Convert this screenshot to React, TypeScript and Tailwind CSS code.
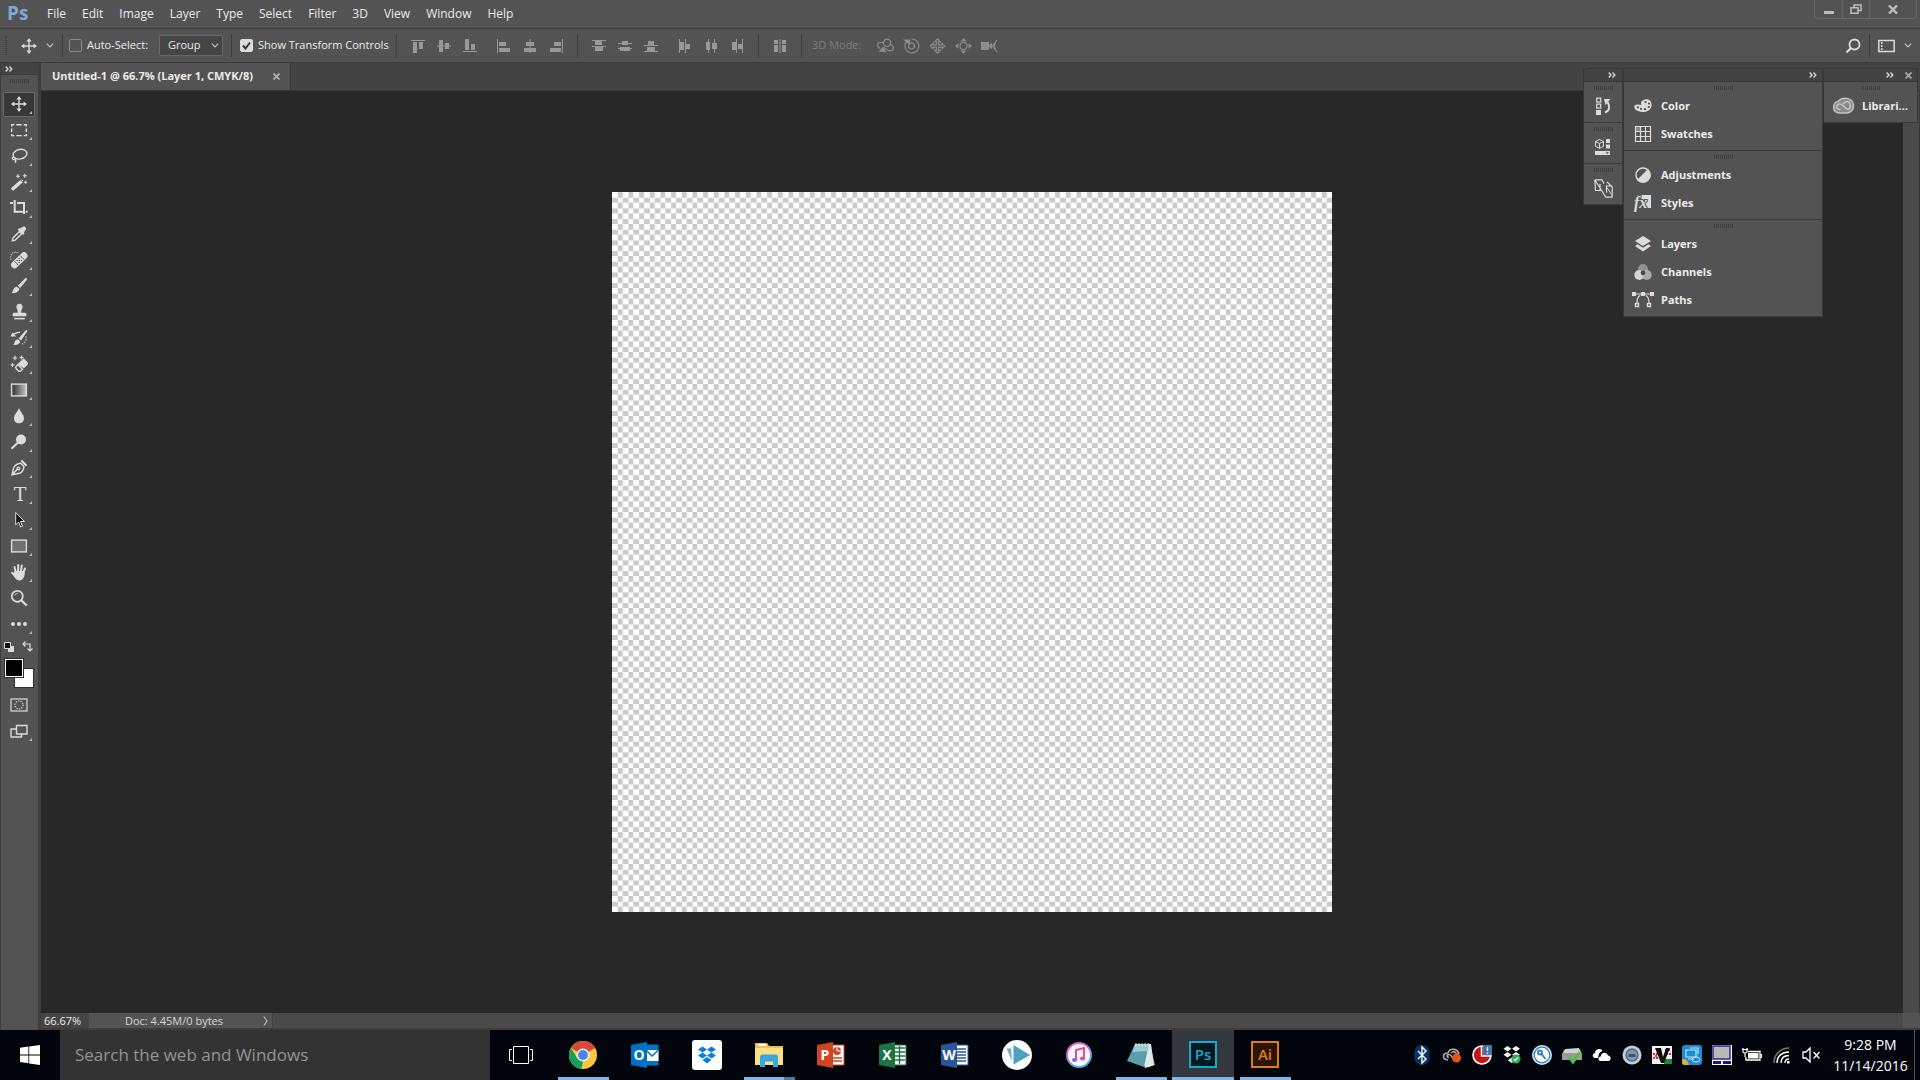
import type { ReactNode } from 'react';

const menus = ['File', 'Edit', 'Image', 'Layer', 'Type', 'Select', 'Filter', '3D', 'View', 'Window', 'Help'];

function Icon({ size = 18, children }: { size?: number; children: ReactNode }) {
  return (
    <svg
      width={size}
      height={size}
      viewBox={`0 0 ${size} ${size}`}
      fill="none"
      stroke="currentColor"
      strokeWidth="1.4"
      className="shrink-0"
    >
      {children}
    </svg>
  );
}

function DoubleChevron() {
  return (
    <svg width="8" height="6" viewBox="0 0 8 6" fill="none" stroke="#d6d6d6" strokeWidth="1.4">
      <path d="M.7.6 3 3 .7 5.4M4.5.6 6.8 3 4.5 5.4" />
    </svg>
  );
}

function Chevron() {
  return (
    <svg width="8" height="5" viewBox="0 0 8 5" fill="none" stroke="#c4c4c4" strokeWidth="1.1">
      <path d="M.8.6 4 3.9 7.2.6" />
    </svg>
  );
}

function Gripper() {
  return (
    <div className="flex h-1 justify-center gap-px">
      {Array.from({ length: 10 }, (_, i) => (
        <span key={i} className="w-px bg-[#3f3f3f]" />
      ))}
    </div>
  );
}

const Separator = () => <span className="mx-2 h-[23px] w-px shrink-0 bg-[#3d3d3d]" />;

const moveIcon = (
  <Icon>
    <path d="M9 3v12M3 9h12" />
    <path
      d="M9 1 6.4 4.4h5.2zM9 17l-2.6-3.4h5.2zM1 9l3.4-2.6v5.2zM17 9l-3.4-2.6v5.2z"
      fill="currentColor"
      stroke="none"
    />
  </Icon>
);

const tools: { name: string; icon: ReactNode; plain?: boolean }[] = [
  { name: 'Move', icon: moveIcon },
  {
    name: 'Rectangular Marquee',
    icon: (
      <Icon>
        <path d="M1.7 5.5V3.7h2.6M6.3 3.7h5.4M13.7 3.7h2.6v1.8M16.3 7.4v3.6M16.3 13v1.6h-2.6M11.7 14.6H6.3M4.3 14.6H1.7V13M1.7 11V7.4" />
      </Icon>
    ),
  },
  {
    name: 'Lasso',
    icon: (
      <Icon>
        <ellipse cx="10" cy="7.2" rx="7" ry="4.8" transform="rotate(-12 10 7.2)" />
        <path d="M4 9.7c-1.5.2-2.2 2-1 2.7 1.4.6 3-.3 2.6-1.6M5 12c.9 1.1.9 2.3.2 3.8" />
      </Icon>
    ),
  },
  {
    name: 'Magic Wand',
    icon: (
      <Icon>
        <path d="m3 15.6 8.6-7.4" strokeWidth="3.4" strokeLinecap="round" />
        <path d="m11 7.2 1.8 1.8" stroke="#535353" strokeWidth="1" />
        <path d="M8 1.2v4M6 3.2h4M14.8.8v4M12.8 2.8h4M15.6 7.8v3M14 9.3h3" strokeWidth="1.1" />
      </Icon>
    ),
  },
  {
    name: 'Crop',
    icon: (
      <Icon>
        <path d="M0 4h3M4.7 1v11.8H14M7 4h7v11M15.6 12.8h2" strokeWidth="2" />
      </Icon>
    ),
  },
  {
    name: 'Eyedropper',
    icon: (
      <Icon>
        <path d="m2.3 15.8.7-2.9 6.5-6.4 2.2 2.2-6.4 6.4z" />
        <path
          d="M10 3.6 13 1.8c1.2-1.2 4 1.4 2.8 2.8l-1.9 3 .6 1-1.4 1.4-5.4-5.3L9 3.2z"
          fill="currentColor"
          stroke="none"
        />
      </Icon>
    ),
  },
  {
    name: 'Spot Healing Brush',
    icon: (
      <Icon>
        <path d="m4.6 13.8 9.4-9" strokeWidth="7" strokeLinecap="round" />
        <path d="m4.5 10.2 3.8 4M10.4 4.7l3.8 4" stroke="#535353" strokeWidth="1" />
        <path d="M9.3 7.3v.1M7.2 9.4v.1M11.4 9.4v.1M9.3 11.5v.1M9.3 9.4v.1" stroke="#535353" strokeLinecap="round" />
        <path d="M1.1 8.5C-.3 5.4 1.8 1.6 5 1.3c1.2-.1 2 .1 2.8.5" strokeWidth="1.2" strokeDasharray="1 1.2" />
      </Icon>
    ),
  },
  {
    name: 'Brush',
    icon: (
      <Icon>
        <path
          d="M16.6 1.2c.7.6.4 1.4-.3 2.3L10.2 11 7.7 8.8l6.8-6.9c.8-.8 1.5-1.2 2.1-.7zM7 9.7l2.3 2.1c-.1 2.7-3.3 4.8-7.9 4.3 1.6-1 1.3-2.6 2.2-4.2.8-1.4 2-2.2 3.4-2.2z"
          fill="currentColor"
          stroke="none"
        />
      </Icon>
    ),
  },
  {
    name: 'Clone Stamp',
    icon: (
      <Icon>
        <path
          d="M6.4 4.1c0-4.4 6.2-4.4 6.2 0 0 2-1.6 2.6-1.4 5.7h3.6c1 0 1.6.7 1.6 1.7v1.7H2.6v-1.7c0-1 .6-1.7 1.6-1.7h3.6c.2-3.1-1.4-3.7-1.4-5.7z"
          fill="currentColor"
          stroke="none"
        />
        <path d="M4.2 15.6h10.6" strokeWidth="1.6" />
      </Icon>
    ),
  },
  {
    name: 'History Brush',
    icon: (
      <Icon>
        <path
          d="M17 1c.5.5.3 1.2-.2 2L11 11.4 8.6 9.6l6.3-7.4C15.6 1.3 16.5.6 17 1zM7.8 10.300l2.400 1.900c-.3 2.600-3.200 4.300-7.200 3.700 1.500-1 1.300-2.400 2-3.700.7-1.200 1.500-1.900 2.800-1.900z"
          fill="currentColor"
          stroke="none"
        />
        <path d="M2.5 6.5C4.5 3.5 7.6 3.5 10 3.3" />
        <path d="M.3 7.5h5.8L2.6 3.4z" fill="currentColor" stroke="none" />
        <path d="M15.8 7.5c1 3-.5 6.5-3.5 7.5" strokeWidth="1.2" strokeDasharray="1.2 1.5" />
      </Icon>
    ),
  },
  {
    name: 'Background Eraser',
    icon: (
      <Icon>
        <path d="m8.6 9 5.1-4.8 3.1 3.2c.7.7.7 1.4 0 2l-3 3z" fill="currentColor" />
        <path d="m7.8 9.7 4.7 4.6-1.5 1.4c-.9.8-1.9.8-2.7 0l-2-2c-.8-.8-.8-1.7 0-2.5z" />
        <path d="M5 .8v4.4M2.8 3h4.4M11.5.5v4M9.5 2.5h4M2.5 8v4M.5 10h4" strokeWidth="1.2" />
      </Icon>
    ),
  },
  {
    name: 'Gradient',
    icon: (
      <Icon>
        <defs>
          <linearGradient id="gradient-tool">
            <stop offset="0" stopColor="#2f2f2f" />
            <stop offset="1" stopColor="#c4c4c4" />
          </linearGradient>
        </defs>
        <rect x="1.6" y="3.1" width="14.8" height="11.8" fill="url(#gradient-tool)" />
      </Icon>
    ),
  },
  {
    name: 'Blur',
    icon: (
      <Icon>
        <path d="M9 1c1 3.7 5 6.2 5 10.4 0 6.4-10 6.4-10 0C4 7.2 8 4.7 9 1z" fill="currentColor" stroke="none" />
      </Icon>
    ),
  },
  {
    name: 'Dodge',
    icon: (
      <Icon>
        <circle cx="11" cy="6.5" r="5" fill="currentColor" stroke="none" />
        <path d="m8 9.5-6.5 6.3" strokeWidth="2" />
      </Icon>
    ),
  },
  {
    name: 'Pen',
    icon: (
      <Icon>
        <path d="m2 15.8 1.7-7.3c1.5-2.5 4-4.1 7-4.3l3.2 3.4c-.2 3.2-1.8 5.6-4.4 6.7zM2.3 15.5l5-5.3" />
        <circle cx="8.4" cy="9.4" r="1.3" />
        <path d="m10.6 2.2 1.6-1.4 5 5.1-1.5 1.6z" fill="currentColor" stroke="none" />
      </Icon>
    ),
  },
  {
    name: 'Horizontal Type',
    icon: <span className="pl-[2px] font-['DejaVu_Serif',serif] text-[19px] leading-6">T</span>,
  },
  {
    name: 'Path Selection',
    icon: (
      <Icon>
        <path d="M5.7 1.5v12.3l3-2.6 2 4.8 1.9-.8-2.1-4.7h4z" fill="#161616" strokeWidth="1" />
      </Icon>
    ),
  },
  {
    name: 'Rectangle',
    icon: (
      <Icon>
        <rect x="1.6" y="3.1" width="14.8" height="11.8" fill="#717171" />
      </Icon>
    ),
  },
  {
    name: 'Hand',
    icon: (
      <Icon>
        <path d="M5.7 9 4.5 4M8.2 8V2M11 8l.8-5.6M13.3 9.5l1.7-4M5 12.500 2 9.7" strokeWidth="2" strokeLinecap="round" />
        <path d="M4.6 8h9.8c1.2 2.7-.5 9.5-5 9.5-3.2 0-5.8-4-6.2-6z" fill="currentColor" stroke="none" />
      </Icon>
    ),
  },
  {
    name: 'Zoom',
    plain: true,
    icon: (
      <Icon>
        <circle cx="7.3" cy="7.3" r="5.5" strokeWidth="1.7" />
        <path d="M4.6 6.5c.5-1.3 1.5-2 3-2" strokeWidth="1" />
        <path d="m11.5 11.5 5.2 5" strokeWidth="2.4" />
      </Icon>
    ),
  },
  {
    name: 'Edit Toolbar',
    icon: (
      <Icon>
        <path d="M3 9h.01M9 9h.01M15 9h.01" strokeWidth="4" strokeLinecap="round" />
      </Icon>
    ),
  },
];

// solid glyphs of the align and distribute buttons, 14 by 14
const alignGroups: { name: string; d: string }[][] = [
  [
    { name: 'Align top edges', d: 'M0 1h14v1H0zM2 3h4v11H2zM8 3h4v7H8z' },
    { name: 'Align vertical centers', d: 'M0 6.5h14v1H0zM2 1h4v12H2zM8 4h4v6H8z' },
    { name: 'Align bottom edges', d: 'M0 12h14v1H0zM2 0h4v11H2zM8 5h4v6H8z' },
  ],
  [
    { name: 'Align left edges', d: 'M0 0h1v14H0zM2 3h7v4H2zM2 9h11v4H2z' },
    { name: 'Align horizontal centers', d: 'M6.5 0h1v14h-1zM3 3h8v4H3zM1 9h12v4H1z' },
    { name: 'Align right edges', d: 'M13 0h1v14h-1zM5 3h7v4H5zM1 9h11v4H1z' },
  ],
  [
    { name: 'Distribute top edges', d: 'M0 1h14v1H0zM3 2h7v4H3zM0 7h14v1H0zM3 8h8v4H3z' },
    { name: 'Distribute vertical centers', d: 'M0 4h14v1H0zM4 2h6v4H4zM0 9h14v1H0zM2 8h10v4H2z' },
    { name: 'Distribute bottom edges', d: 'M0 6h14v1H0zM4 2h6v4H4zM0 12h14v1H0zM3 8h8v4H3z' },
  ],
  [
    { name: 'Distribute left edges', d: 'M1 0h1v14H1zM2 3h4v8H2zM7 0h1v14H7zM8 5h4v5H8z' },
    { name: 'Distribute horizontal centers', d: 'M4 0h1v14H4zM2 3h4v8H2zM10 0h1v14h-1zM8 4h5v6H8z' },
    { name: 'Distribute right edges', d: 'M6 0h1v14H6zM2 3h4v8H2zM12 0h1v14h-1zM8 5h4v5H8z' },
  ],
];

const modes3d: { name: string; icon: ReactNode }[] = [
  {
    name: 'Orbit',
    icon: (
      <>
        <circle cx="10" cy="4.8" r="3.6" />
        <path d="M6.4 4.500H3C0 4.500-.3 8 3 10.500M13.500 6c3 2 4 5 1.500 6.500-2 1-5.500 0-8-3.500" />
        <path d="m3 13 3-3.500 2.500 4z" fill="currentColor" />
      </>
    ),
  },
  {
    name: 'Roll',
    icon: (
      <>
        <circle cx="8.500" cy="8" r="3" />
        <path d="M3.500 3.500a7 7 0 1 0 5-2.500" />
        <path d="M1.500 2h5v4z" fill="currentColor" />
      </>
    ),
  },
  {
    name: 'Pan',
    icon: (
      <path d="M8.500.8 5.800 3.600h1.600v3.300H4.100V5.300L1.300 8l2.800 2.700V9.100h3.300v3.300H5.800l2.700 2.800 2.700-2.800H9.600V9.100h3.300v1.600L15.700 8l-2.800-2.700v1.600H9.600V3.600h1.600z" />
    ),
  },
  {
    name: 'Slide',
    icon: (
      <>
        <circle cx="8.500" cy="8" r="3.500" />
        <path
          d="M8.500 0l2.800 3.400H5.700zM8.500 16l2.800-3.400H5.700zM0 8l3.400-2.800v5.600zM17 8l-3.400-2.800v5.600z"
          fill="currentColor"
          stroke="none"
        />
      </>
    ),
  },
  {
    name: 'Zoom 3D camera',
    icon: (
      <>
        <path d="M0 4h8v8H0zM7 8l4-3.500v7z" fill="currentColor" stroke="none" />
        <path d="m16 2-4.500 6 4.500 6M14.500 5c-1.300 1.800-1.300 4.200 0 6" />
      </>
    ),
  },
];

const panelGroups: { label: string; icon: ReactNode }[][] = [
  [
    {
      label: 'Color',
      icon: (
        <Icon>
          <path
            d="M9.5 3C12 1.3 17.5 2 17.6 7.5 17.7 13 13 15 9.6 15 4 15 .2 12.5.3 9.7c.1-2.2 3-2.6 5.1-1.9 1.7.4 2.3-.2 1.7-1.5C6.4 4.8 8 3.8 9.5 3z"
            fill="currentColor"
            stroke="none"
          />
          <path
            d="M11.5 5h.1M15 6.5h.1M14.8 10h.1M11 12.2h.1M7 11.8h.1M3.8 10.3h.1"
            stroke="#535353"
            strokeWidth="2.2"
            strokeLinecap="round"
          />
        </Icon>
      ),
    },
    {
      label: 'Swatches',
      icon: (
        <Icon>
          <path d="M1.5 1.5h15v15h-15zM6.5 1.5v15M11.5 1.5v15M1.5 6.5h15M1.5 11.5h15" strokeWidth="1.2" />
          <path d="M2 2h4v4H2z" fill="#8a8a8a" stroke="none" />
        </Icon>
      ),
    },
  ],
  [
    {
      label: 'Adjustments',
      icon: (
        <Icon>
          <circle cx="9" cy="9" r="7" />
          <path d="M14 4A7 7 0 0 1 4 14z" fill="currentColor" />
        </Icon>
      ),
    },
    {
      label: 'Styles',
      icon: (
        <Icon>
          <path d="M3 1h14v13h-4z" fill="currentColor" stroke="none" />
          <text
            x="0"
            y="14"
            fontFamily="Liberation Serif, serif"
            fontStyle="italic"
            fontWeight="700"
            fontSize="16"
            fill="currentColor"
            stroke="#535353"
            strokeWidth="2"
            paintOrder="stroke"
          >
            fx
          </text>
        </Icon>
      ),
    },
  ],
  [
    {
      label: 'Layers',
      icon: (
        <Icon>
          <path d="m9 1 8 5-8 5-8-5zM1 11l2.6-1.7L9 12.7l5.4-3.4L17 11l-8 5.5z" fill="currentColor" stroke="none" />
        </Icon>
      ),
    },
    {
      label: 'Channels',
      icon: (
        <Icon>
          <g stroke="none">
            <circle cx="9" cy="6" r="5" fill="#8f8f8f" />
            <circle cx="5.3" cy="12" r="5" fill="#d4d4d4" />
            <circle cx="12.7" cy="12" r="5" fill="#b4b4b4" fillOpacity=".9" />
            <circle cx="9" cy="9.8" r="2.4" fill="#4a4a4a" />
          </g>
        </Icon>
      ),
    },
    {
      label: 'Paths',
      icon: (
        <Icon size={22}>
          <path d="M2 5h18M8 6.5C5.5 8 5 11 5 14M14 6.5c2.5 1.5 3 4.5 3 7.5" strokeWidth="1.2" />
          <path d="M0 3h4v4H0zM18 3h4v4h-4zM9 3h4v4H9z" fill="currentColor" stroke="none" />
          <path d="M3.5 14.5h3v3h-3zM15.5 14.5h3v3h-3z" />
        </Icon>
      ),
    },
  ],
];

const collapsedPanels: { name: string; icon: ReactNode }[] = [
  {
    name: 'History',
    icon: (
      <>
        <path d="M2.7 1.2h4v4h-4zM2.7 7.2h4v4h-4z" strokeWidth="1.2" />
        <path d="M2 13h5v5H2z" fill="currentColor" stroke="none" />
        <path d="M11 15.5c4.500-1.500 5.500-6 2.500-10.500" strokeWidth="2" />
        <path d="M10 2h6.500l-5 6z" fill="currentColor" stroke="none" />
      </>
    ),
  },
  {
    name: 'Properties',
    icon: (
      <>
        <path d="m5.5 1.5 4 2v4.8l-4 2-4-2V3.5zM1.5 3.5l4 2 4-2M5.5 5.5v4.8" strokeWidth="1" />
        <path d="M12 1h4v4h-4zM12 6.5h4v4h-4zM1 13h15v4H1z" fill="currentColor" stroke="none" />
        <path d="M11.5 14.3H15L13.300 16z" fill="#535353" stroke="none" />
      </>
    ),
  },
  {
    name: 'Device Preview',
    icon: (
      <>
        <path d="M.8.8 1.500 11.500H6V5M.8.8H8l2 4M.8.8l11 17.400h6.400V8L13 3M12.500 13.500V7h5.500" strokeWidth="1.2" />
        <path d="m13 8.500 4.500 7" strokeWidth="1" />
      </>
    ),
  },
];

function OfficeIcon({ letter, color, kind }: { letter: string; color: string; kind: string }) {
  return (
    <svg width="28" height="28" viewBox="0 0 28 28">
      <path d="M14 4h13v20H14z" fill={kind === 'mail' ? '#0072c6' : '#fff'} stroke={color} />
      {kind === 'mail' && (
        <>
          <path d="M15 9h12.5v11H15z" fill="#fff" />
          <path d="m15 9 6 6 6.5-6" fill="none" stroke="#0072c6" strokeWidth="1.5" />
        </>
      )}
      {kind === 'chart' && (
        <>
          <circle cx="20" cy="10" r="4" fill={color} />
          <path d="M16 17h9M16 20h9" stroke={color} strokeWidth="1.5" />
          <path d="M20 5v5h5" fill="none" stroke="#fff" />
        </>
      )}
      {kind === 'grid' && <path d="M16 7h10M16 11h10M16 15h10M16 19h10M20.5 5v18" stroke={color} strokeWidth="1.5" />}
      {kind === 'lines' && <path d="M16 8h9M16 11h9M16 14h9M16 17h9M16 20h9" stroke={color} strokeWidth="1.5" />}
      <path d="M0 4 16 1v26L0 24z" fill={color} />
      <text x="8" y="19" textAnchor="middle" fontFamily="Open Sans, sans-serif" fontWeight="700" fontSize="14" fill="#fff">
        {letter}
      </text>
    </svg>
  );
}

function AdobeIcon({ label, color, fill }: { label: string; color: string; fill: string }) {
  return (
    <svg width="28" height="28" viewBox="0 0 28 28">
      <rect x="1" y="1" width="26" height="25" fill={fill} stroke={color} strokeWidth="2" />
      <text x="14" y="19" textAnchor="middle" fontFamily="Open Sans, sans-serif" fontSize="15" fontWeight="600" fill={color}>
        {label}
      </text>
    </svg>
  );
}

const taskbarApps: { name: string; state?: 'open' | 'stacked' | 'active'; icon: ReactNode }[] = [
  {
    name: 'Task View',
    icon: (
      <svg width="24" height="20" viewBox="0 0 24 20" fill="none" stroke="#fff">
        <path d="M4.5 1.5h15v17h-15zM3 4.5H.5v11H3M21 4.5h2.5v11H21" />
      </svg>
    ),
  },
  {
    name: 'Chrome',
    state: 'open',
    icon: (
      <svg width="28" height="28" viewBox="0 0 28 28">
        <circle cx="14" cy="14" r="14" fill="#fdc83a" />
        <path d="M14 14 1.9 7A14 14 0 0 1 26.1 7z" fill="#d8483c" />
        <path d="M1.9 7 8.5 17.5 14 20l-1.5 8A14 14 0 0 1 1.9 7z" fill="#159f5c" />
        <path d="M14 7h12.1L14 10z" fill="#d8483c" />
        <circle cx="14" cy="14" r="6.5" fill="#f2f2f2" />
        <circle cx="14" cy="14" r="5" fill="#4a84f0" />
      </svg>
    ),
  },
  { name: 'Outlook', icon: <OfficeIcon letter="O" color="#0072c6" kind="mail" /> },
  {
    name: 'Dropbox',
    icon: (
      <svg width="30" height="30" viewBox="0 0 30 30">
        <rect width="30" height="30" rx="3" fill="#fff" />
        <path
          d="m10.5 6.5 4.5 3-4.5 3-4.5-3zM19.5 6.5l4.5 3-4.5 3-4.5-3zM10.5 12.5l4.5 3-4.5 3-4.5-3zM19.5 12.5l4.5 3-4.5 3-4.5-3zM15 17l4.5 3L15 23.5 10.5 20z"
          fill="#0a7fe6"
        />
      </svg>
    ),
  },
  {
    name: 'File Explorer',
    state: 'stacked',
    icon: (
      <svg width="28" height="26" viewBox="0 0 28 26">
        <path d="M0 1h12l2 3h14v19H0z" fill="#eec04f" />
        <path d="M3 2h8v2H3z" fill="#fff" />
        <path d="M0 6h28v17H0z" fill="#fbdf86" />
        <path d="M5 25V15c0-1.5 1-2.5 2.5-2.5h13c1.5 0 2.5 1 2.5 2.5v10h-5v-5.5h-8V25z" fill="#36a9e1" />
      </svg>
    ),
  },
  { name: 'PowerPoint', icon: <OfficeIcon letter="P" color="#d04423" kind="chart" /> },
  { name: 'Excel', icon: <OfficeIcon letter="X" color="#1f7244" kind="grid" /> },
  { name: 'Word', icon: <OfficeIcon letter="W" color="#2a5699" kind="lines" /> },
  {
    name: 'Media Player',
    icon: (
      <svg width="30" height="30" viewBox="0 0 30 30">
        <circle cx="15" cy="15" r="15" fill="#fff" />
        <path d="M11.5 5 28 15 11.5 24.5z" fill="#4f9fc4" />
        <path d="M4.5 8.5H9L10 21z" fill="#6bb0cf" />
      </svg>
    ),
  },
  {
    name: 'iTunes',
    icon: (
      <svg width="26" height="26" viewBox="0 0 26 26">
        <defs>
          <linearGradient id="itunes" x1="0" x2=".4" y2="1">
            <stop offset="0" stopColor="#f0609a" />
            <stop offset=".5" stopColor="#b874e0" />
            <stop offset="1" stopColor="#40b8f0" />
          </linearGradient>
        </defs>
        <circle cx="13" cy="13" r="12" fill="#fbf7fc" stroke="url(#itunes)" strokeWidth="2" />
        <path d="M10 18V8l8-2v10" fill="none" stroke="#e0508c" strokeWidth="2" />
        <ellipse cx="8.5" cy="18" rx="2.5" ry="2" fill="#8a68dc" />
        <ellipse cx="16.5" cy="16.5" rx="2.5" ry="2" fill="#d050a8" />
      </svg>
    ),
  },
  {
    name: 'Notepad',
    state: 'open',
    icon: (
      <svg width="28" height="28" viewBox="0 0 28 28">
        <path d="M23 4l5 20-7 2.5z" fill="#b98d50" />
        <path d="M9 3h15l3 21-9 3z" fill="#dfe9ea" />
        <path d="M8 3h14l-5 23L0 20z" fill="#5b9da8" />
        <path d="M8 3h14l-1.5 7-15 1z" fill="#9ccbd2" />
        <path d="M9 2v3M12 2v3M15 2v3M18 2v3M21 2v3" stroke="#dfe9ea" />
      </svg>
    ),
  },
  { name: 'Photoshop', state: 'active', icon: <AdobeIcon label="Ps" color="#18a9cf" fill="#04181f" /> },
  { name: 'Illustrator', state: 'open', icon: <AdobeIcon label="Ai" color="#e07b16" fill="#2a1503" /> },
];

const trayIcons: { name: string; icon: ReactNode }[] = [
  {
    name: 'Bluetooth',
    icon: (
      <>
        <rect x="2.5" width="15" height="20" rx="7" fill="#0a3264" />
        <path d="m6 6 8 8-4 4V2l4 4-8 8" fill="none" stroke="#fff" strokeWidth="1.4" />
      </>
    ),
  },
  {
    name: 'Creative Cloud',
    icon: (
      <>
        <path
          d="M6 15c-6-.5-6-7 0-7 2-6 10-4 11 1M7 12.5c-2.5 0-2.5-3 0-3s4 5 6 5M9 8c3-3 6 0 6 3"
          fill="none"
          stroke="#a9a9a9"
          strokeWidth="1.6"
        />
        <circle cx="14.5" cy="13" r="4.5" fill="#ef4e14" />
      </>
    ),
  },
  {
    name: 'Backup',
    icon: (
      <>
        <circle cx="10" cy="10" r="9" fill="#c81414" stroke="#fff" strokeWidth="1.6" />
        <path d="M11 0h9v10h-9z" fill="#3c78a8" />
        <path d="M9.5 1.5V11H19" fill="none" stroke="#fff" strokeWidth="1.5" />
        <path d="M15.5 2v4M15.5 7.5V9" stroke="#fff" strokeWidth="1.3" />
      </>
    ),
  },
  {
    name: 'Dropbox',
    icon: (
      <>
        <path
          d="m5.5 1 4 2.8-4 2.8-4-2.8zM14 1l4 2.8-4 2.8-4-2.8zM5.5 7l4 2.8-4 2.8-4-2.8zM14 7l4 2.8-4 2.8-4-2.8zM9.7 12.5l4 2.8-4 2.8-4-2.8z"
          fill="#f5f5f5"
        />
        <circle cx="14" cy="14" r="4.5" fill="#34a853" />
        <path d="m11.8 14 1.6 1.6 2.8-3.2" fill="none" stroke="#fff" strokeWidth="1.3" />
      </>
    ),
  },
  {
    name: 'Password Manager',
    icon: (
      <>
        <circle cx="10" cy="10" r="9" fill="#fff" stroke="#d5e6f2" strokeWidth="2" />
        <circle cx="10" cy="10" r="7.8" fill="none" stroke="#2c82c0" strokeWidth="1.3" />
        <circle cx="8" cy="7.5" r="2" fill="none" stroke="#2c82c0" strokeWidth="2" />
        <path d="m9.500 9 4 5" stroke="#2c82c0" strokeWidth="2" />
      </>
    ),
  },
  {
    name: 'Safely Remove Hardware',
    icon: (
      <>
        <path d="m3 4 14-1 3 6H0z" fill="#d2d2d2" />
        <path d="M0 8h20v7H0z" fill="#9a9a9a" />
        <path d="m7 12 4 5 7-10" fill="none" stroke="#4ec244" strokeWidth="3" />
      </>
    ),
  },
  {
    name: 'OneDrive',
    icon: (
      <>
        <path d="M3 13c-3-.5-3-4.5 0-5 0-4 5-5.5 7.5-2.5L7 8.5 6 13z" fill="#fff" />
        <path d="M8.5 16c-3-.3-2.5-4.5.3-4.5.3-4.5 6-5 7.2-1 3.5.3 3.5 5 .5 5.5z" fill="#fff" />
      </>
    ),
  },
  {
    name: 'System Monitor',
    icon: (
      <>
        <circle cx="10" cy="10" r="9.5" fill="#c9ccd0" />
        <circle cx="10" cy="10" r="6" fill="#7d9cb4" stroke="#46647c" strokeWidth="1.3" />
        <path d="M6.5 9h7v3h-7z" fill="#35546c" />
      </>
    ),
  },
  {
    name: 'VNC',
    icon: (
      <>
        <path d="M0 1h20v18H0z" fill="#f2f2f2" />
        <path d="M1 9h6M13 5h6M1 13h5M14 9h5M3 11h3" stroke="#cf3048" strokeWidth="2" strokeDasharray="2 1" />
        <path d="M12 14h8v5h-8z" fill="#1c8a2c" />
        <path d="M3 3h6l2 9 3-9h4l-6 15H9z" fill="#0c0c0c" />
      </>
    ),
  },
  {
    name: 'Intel Graphics',
    icon: (
      <>
        <rect width="20" height="20" rx="3" fill="#1d8bd0" />
        <path d="M0 14c6 0 6 3 7 6H3a3 3 0 0 1-3-3z" fill="#e2b13c" />
        <path d="M4 5h10v7H4zM8 3h8v6M6 14h6" fill="none" stroke="#bfe4fa" strokeWidth="1.2" />
        <ellipse cx="14" cy="14.5" rx="4" ry="2.5" fill="none" stroke="#bfe4fa" />
      </>
    ),
  },
  {
    name: 'Touchpad',
    icon: (
      <>
        <path d="M0 0h20v20H0z" fill="#fff" />
        <path d="M1 1h17v13H1z" fill="#b9b9b9" stroke="#2a2a8c" strokeWidth="1.5" />
        <path d="M1 16h8v3H1zM11 16h8v3h-8z" fill="#1a1a78" />
      </>
    ),
  },
  {
    name: 'Battery',
    icon: (
      <>
        <path d="M6 6.500h12v8.500H4v-3" fill="none" stroke="#fff" strokeWidth="1.3" />
        <path d="M6 8h10.500v5.500H6zM18.500 9H20v4h-1.500z" fill="#fff" />
        <path d="M1 3v3.5c0 1 .8 1.5 2 1.5s2-.5 2-1.5V3M0 4.5h6M3 8v4" fill="none" stroke="#fff" strokeWidth="1.2" />
      </>
    ),
  },
  {
    name: 'Network',
    icon: (
      <>
        <path d="M2 18C2 9 9 3 17 3" fill="none" stroke="#777" strokeWidth="1.4" />
        <path d="M5 18C5 11 10 7 17 7M9 18c0-5 3-7.5 8-7.5" fill="none" stroke="#fff" strokeWidth="1.4" />
        <path d="M13 18c0-2.5 1.5-4 4-4" fill="none" stroke="#fff" strokeWidth="1.4" />
        <path d="M15 16h2.5v2.5H15z" fill="#fff" />
      </>
    ),
  },
  {
    name: 'Volume',
    icon: <path d="M1 7h3l4-4v14l-4-4H1zM11.500 7l6 6.500M17.500 7l-6 6.500" fill="none" stroke="#fff" strokeWidth="1.3" />,
  },
];

function MenuBar() {
  return (
    <header className="flex h-[29px] items-start border-b border-[#3b3b3b] bg-[#535353]">
      <div className="w-[39px] pl-[7px] text-[19px] leading-[26px] font-bold text-[#7fa8d6]">Ps</div>
      <nav className="flex flex-1 text-xs leading-[28px] text-[#ececec]">
        {menus.map((m) => (
          <button key={m} type="button" className="px-2 hover:bg-[#6a6a6a]">
            {m}
          </button>
        ))}
      </nav>
      <div className="mr-[3px] flex h-[19px] rounded-b-sm border border-t-0 border-[#676767] text-[#bdbdbd]">
        <button type="button" aria-label="Minimize" className="flex w-7 items-center justify-center border-r border-[#676767]">
          <svg width="10" height="12" viewBox="0 0 10 12">
            <path d="M0 8h10v3H0z" fill="currentColor" />
          </svg>
        </button>
        <button type="button" aria-label="Restore" className="flex w-[27px] items-center justify-center border-r border-[#676767]">
          <svg width="12" height="10" viewBox="0 0 12 10" fill="none" stroke="currentColor" strokeWidth="1.5">
            <path d="M4 3.5V1h7v5.5H8.5M1 3.8h7v5.4H1z" />
          </svg>
        </button>
        <button type="button" aria-label="Close" className="flex w-[46px] items-center justify-center">
          <svg width="10" height="9" viewBox="0 0 10 9" stroke="currentColor" strokeWidth="2.4">
            <path d="m1 .5 8 8M9 .5l-8 8" />
          </svg>
        </button>
      </div>
    </header>
  );
}

function OptionsBar() {
  return (
    <div className="flex h-[34px] items-center border-b border-[#3b3b3b] bg-[#535353] text-[11px] text-[#ececec]">
      <div className="ml-[5px] flex h-5 w-[2px] flex-col justify-between">
        {Array.from({ length: 10 }, (_, i) => (
          <span key={i} className="h-px bg-[#3f3f3f]" />
        ))}
      </div>
      <button type="button" aria-label="Tool preset" className="ml-[13px] flex items-center gap-2 text-[#dcdcdc]">
        {moveIcon}
        <Chevron />
      </button>
      <Separator />
      <label className="-ml-[2px] flex w-[90px] items-center gap-[5px] whitespace-nowrap">
        <input type="checkbox" className="size-[13px] appearance-none rounded-xs border border-[#8a8a8a]" />
        Auto-Select:
      </label>
      <div className="relative">
        <select
          aria-label="Auto-select target"
          className="h-[21px] w-16 appearance-none rounded-xs border border-[#686868] bg-[#454545] pl-2 outline-none"
        >
          <option>Group</option>
          <option>Layer</option>
        </select>
        <span className="pointer-events-none absolute top-2 right-1">
          <Chevron />
        </span>
      </div>
      <Separator />
      <label className="flex w-[148px] items-center gap-[5px] whitespace-nowrap">
        <span className="relative flex">
          <input
            type="checkbox"
            defaultChecked
            className="peer size-[13px] appearance-none rounded-xs border border-[#8a8a8a] checked:border-[#dcdcdc] checked:bg-[#dcdcdc]"
          />
          <svg
            width="13"
            height="13"
            viewBox="0 0 13 13"
            fill="none"
            stroke="#333"
            strokeWidth="2"
            className="pointer-events-none absolute inset-0 hidden peer-checked:block"
          >
            <path d="m3 6.5 2.5 3L10 3.5" />
          </svg>
        </span>
        Show Transform Controls
      </label>
      <Separator />
      <div className="flex items-center text-[#989898]">
        {alignGroups.map((group, i) => (
          <div key={i} className="flex items-center">
            {i === 2 && <Separator />}
            <div className={i % 2 ? 'ml-2 flex' : 'flex'}>
              {group.map((a) => (
                <button key={a.name} type="button" aria-label={a.name} className="flex w-[26px] justify-center">
                  <svg width="14" height="14" viewBox="0 0 14 14" fill="currentColor">
                    <path d={a.d} />
                  </svg>
                </button>
              ))}
            </div>
          </div>
        ))}
        <Separator />
        <button type="button" aria-label="Auto-align layers" className="flex w-[26px] justify-center">
          <svg width="12" height="14" viewBox="0 0 12 14" fill="currentColor">
            <path d="M0 1h4v4H0zM0 6h4v7H0zM5.5 0h1v14h-1zM8 1h4v4H8zM8 6h4v7H8z" />
          </svg>
        </button>
        <Separator />
      </div>
      <span className="ml-[2px] w-[60px] whitespace-nowrap text-[#7e7e7e]">3D Mode:</span>
      <div className="flex flex-1 text-[#8c8c8c]">
        {modes3d.map((m) => (
          <button key={m.name} type="button" aria-label={m.name} className="flex w-[26px] justify-center">
            <svg width="17" height="16" viewBox="0 0 17 16" fill="none" stroke="currentColor" strokeWidth="1.2">
              {m.icon}
            </svg>
          </button>
        ))}
      </div>
      <button type="button" aria-label="Search" className="text-[#dcdcdc]">
        <Icon size={16}>
          <circle cx="9.5" cy="6.5" r="5" strokeWidth="1.8" />
          <path d="M6 10 1.5 14.5" strokeWidth="2.2" />
        </Icon>
      </button>
      <Separator />
      <button type="button" aria-label="Choose workspace" className="mr-2 flex items-center gap-[9px] text-[#dcdcdc]">
        <svg width="17" height="14" viewBox="0 0 17 14" fill="none" stroke="currentColor">
          <path d="M.8 1.5h15.4v11H.8z" strokeWidth="1.5" />
          <path d="M3 4h1.5M3 7h1.5M3 10h1.5" strokeWidth="1.8" />
        </svg>
        <Chevron />
      </button>
    </div>
  );
}

function Toolbar() {
  return (
    <aside className="w-[41px] shrink-0 border-r-[3px] border-l border-[#3d3d3d] bg-[#535353] text-[#dcdcdc]">
      <div className="flex h-3 items-center border-b border-[#3b3b3b] bg-[#434343] pl-1">
        <DoubleChevron />
      </div>
      <div className="h-4 pt-1">
        <Gripper />
      </div>
      {tools.map((t, i) => (
        <button key={t.name} type="button" aria-label={t.name} className="relative flex h-[26px] w-full items-center pl-[2px]">
          <span
            className={`flex h-[25px] w-8 items-center justify-center rounded-xs border ${
              i === 0 ? 'border-[#6a6a6a] bg-[#383838]' : 'border-transparent'
            }`}
          >
            {t.icon}
          </span>
          {!t.plain && (
            <svg width="3" height="3" viewBox="0 0 3 3" className="absolute right-[6px] bottom-[3px]">
              <path d="M3 0v3H0z" fill="#b8b8b8" />
            </svg>
          )}
        </button>
      ))}
      <div className="flex h-[19px] items-center gap-2 pl-[3px]">
        <button type="button" aria-label="Default colors">
          <svg width="10" height="10" viewBox="0 0 10 10">
            <path d="M4 4h6v6H4z" fill="#dcdcdc" />
            <path d="M.5.5h6v6h-6z" fill="#111" stroke="#dcdcdc" />
          </svg>
        </button>
        <button type="button" aria-label="Switch colors">
          <svg width="11" height="11" viewBox="0 0 11 11" fill="none" stroke="currentColor" strokeWidth="1.2">
            <path d="M1.5 3H8v6M3.5.5 1 3l2.5 2.5M5.5 7.5 8 10l2.5-2.5" />
          </svg>
        </button>
      </div>
      <div className="relative h-9">
        <button
          type="button"
          aria-label="Background color"
          className="absolute top-3 left-[13px] size-5 border border-[#2e2e2e] bg-white"
        />
        <button
          type="button"
          aria-label="Foreground color"
          className="absolute top-[2px] left-[3px] size-5 border border-[#2e2e2e] bg-black inset-ring inset-ring-white"
        />
      </div>
      <button type="button" aria-label="Quick mask" className="flex h-[26px] w-[35px] items-center justify-center">
        <Icon>
          <rect x="1" y="3" width="16" height="12" strokeWidth="1.2" />
          <circle cx="9" cy="9" r="4" strokeDasharray="1.2 1.3" strokeWidth="1.2" />
        </Icon>
      </button>
      <button type="button" aria-label="Screen mode" className="relative flex h-[26px] w-[35px] items-center justify-center">
        <Icon>
          <path d="M6.5 3.5H17V12H6.5zM6.5 7H1v8h10.500v-3" />
        </Icon>
        <svg width="3" height="3" viewBox="0 0 3 3" className="absolute right-[4px] bottom-[3px]">
          <path d="M3 0v3H0z" fill="#b8b8b8" />
        </svg>
      </button>
    </aside>
  );
}

function PanelDock() {
  const cell = 'border-b border-[#3b3b3b] bg-[#535353] pt-1 pb-[2px]';
  return (
    <div className="absolute top-[5px] right-[2px] flex items-start text-[#dcdcdc]">
      <div className="w-10 border-x border-[#383838]">
        <div className="flex h-[14px] items-center justify-end rounded-tl border-y border-[#383838] bg-[#434343] pr-[6px]">
          <DoubleChevron />
        </div>
        {collapsedPanels.map((p) => (
          <div key={p.name} className={cell}>
            <Gripper />
            <button type="button" aria-label={p.name} className="mt-[2px] flex h-7 w-full items-center justify-center">
              <Icon size={19}>{p.icon}</Icon>
            </button>
          </div>
        ))}
      </div>
      <div className="w-[200px] border-x border-[#383838]">
        <div className="flex h-[14px] items-center justify-end border-y border-[#383838] bg-[#434343] pr-[5px]">
          <DoubleChevron />
        </div>
        {panelGroups.map((group, i) => (
          <div key={i} className={cell}>
            <Gripper />
            <div className="mt-[2px]">
              {group.map((p) => (
                <button key={p.label} type="button" className="flex h-7 w-full items-center gap-[7px] pl-2">
                  <span className="flex w-[22px] justify-center">{p.icon}</span>
                  <span className="text-[11px] font-bold text-[#ececec]">{p.label}</span>
                </button>
              ))}
            </div>
          </div>
        ))}
      </div>
      <div className="w-[95px] border-x border-[#383838]">
        <div className="flex h-[14px] items-center justify-end gap-[11px] rounded-tr border-y border-[#383838] bg-[#434343] pr-[5px]">
          <DoubleChevron />
          <svg width="7" height="7" viewBox="0 0 7 7" stroke="#a8a8a8" strokeWidth="1.8">
            <path d="m.5.5 6 6M6.500.5l-6 6" />
          </svg>
        </div>
        <div className={cell}>
          <Gripper />
          <button type="button" className="mt-[2px] flex h-7 w-full items-center gap-[7px] pl-[9px]">
            <svg width="22" height="18" viewBox="0 0 22 18" fill="none" stroke="#c4c4c4" strokeWidth="1.5">
              <path d="M6.500 16C-1 16-1 5.500 5 4.500 9-1 20 .5 20.500 8c.5 5-3.500 8-7 8z" fill="#8a8a8a" />
              <path d="M7.500 12.500c-5-.2-5-5.300-.7-5.500 2-.1 3.200 1.500 4.500 3 1.400 1.500 3.200 2.800 4.700 1.800 2.500-2 1.500-7.300-2-7.300-2 0-3 1-4 2.500" />
            </svg>
            <span className="text-[11px] font-bold whitespace-nowrap text-[#ececec]">Librari...</span>
          </button>
        </div>
      </div>
    </div>
  );
}

function Workspace() {
  return (
    <div className="relative flex flex-1">
      <Toolbar />
      <main className="flex flex-1 flex-col bg-[#282828]">
        <div className="flex h-7 border-b border-[#383838] bg-[#434343]">
          <div className="flex w-[250px] items-center justify-between border-r border-[#383838] bg-[#535353] pr-[10px] pl-[11px] text-[11px] font-bold whitespace-nowrap text-[#ececec]">
            Untitled-1 @ 66.7% (Layer 1, CMYK/8)
            <button type="button" aria-label="Close document">
              <svg width="7" height="7" viewBox="0 0 7 7" stroke="#b4b4b4" strokeWidth="1.6">
                <path d="m.5.5 6 6M6.500.5l-6 6" />
              </svg>
            </button>
          </div>
        </div>
        <div className="flex flex-1">
          <div className="flex flex-1 items-center justify-center">
            <svg width="720" height="720" viewBox="0 0 135 135" shapeRendering="crispEdges">
              <defs>
                <pattern id="transparency" width="2" height="2" patternUnits="userSpaceOnUse">
                  <path d="M0 0h2v2H0z" fill="#fff" />
                  <path d="M1 0h1v1H1zM0 1h1v1H0z" fill="#cbcbcb" />
                </pattern>
              </defs>
              <rect width="135" height="135" fill="url(#transparency)" />
            </svg>
          </div>
          <div className="w-[17px] border-r border-[#383838] bg-[#4a4a4a]" />
        </div>
        <footer className="flex h-[17px] items-stretch border-b-2 border-[#3d3d3d] bg-[#4a4a4a] text-[11px] leading-[15px]">
          <input aria-label="Zoom level" defaultValue="66.67%" className="w-12 bg-[#454545] pl-[3px] text-[#ececec] outline-none" />
          <div className="flex w-[184px] items-center justify-between border-r border-[#434343] bg-[#535353] pr-1 pl-9 text-[#d6d6d6]">
            Doc: 4.45M/0 bytes
            <button type="button" aria-label="Status options">
              <svg width="5" height="10" viewBox="0 0 5 10" fill="none" stroke="#d6d6d6">
                <path d="m1 .5 3 4.5-3 4.5" />
              </svg>
            </button>
          </div>
          <div className="ml-auto w-[17px] bg-[#535353]" />
        </footer>
      </main>
      <PanelDock />
    </div>
  );
}

function Taskbar() {
  return (
    <div className="flex h-[50px] bg-[#02050c] text-white">
      <button type="button" aria-label="Start" className="flex w-[60px] items-center justify-center">
        <svg width="20" height="20" viewBox="0 0 20 20" fill="#fff">
          <path d="M0 2.8 8.4 1.6v7.9H0zM9.2 1.5 20 0v9.5H9.2zM0 10.4h8.4v7.9L0 17.1zM9.2 10.4H20V20L9.2 18.4z" />
        </svg>
      </button>
      <input
        type="search"
        aria-label="Search"
        placeholder="Search the web and Windows"
        className="w-[430px] bg-[#333] px-[15px] text-[17px] outline-none placeholder:text-[#949494]"
      />
      {taskbarApps.map((app) => (
        <button
          key={app.name}
          type="button"
          aria-label={app.name}
          className={`flex w-[62px] flex-col items-center ${app.state === 'active' ? 'bg-[#34373c]' : ''}`}
        >
          <span className="flex flex-1 items-center pt-[2px]">{app.icon}</span>
          <span className={`flex h-[3px] ${app.state === 'active' ? 'w-full' : 'w-[51px]'}`}>
            {app.state && <span className="flex-1 bg-[#7fb6e6]" />}
            {app.state === 'stacked' && <span className="w-[11px] bg-[#54789c]" />}
          </span>
        </button>
      ))}
      <div className="ml-auto flex items-center">
        {trayIcons.map((t) => (
          <button key={t.name} type="button" aria-label={t.name} className="flex w-[30px] justify-center">
            <svg width="20" height="20" viewBox="0 0 20 20">
              {t.icon}
            </svg>
          </button>
        ))}
      </div>
      <div className="flex w-[87px] flex-col items-center justify-center text-sm leading-[21px]">
        <span>9:28 PM</span>
        <span>11/14/2016</span>
      </div>
      <button type="button" aria-label="Show desktop" className="w-[6px] border-l border-[#4c4f55]" />
    </div>
  );
}

export default function App() {
  return (
    <div className="flex min-h-screen flex-col bg-[#282828] font-['Open_Sans','Noto_Sans',sans-serif]">
      <MenuBar />
      <OptionsBar />
      <Workspace />
      <Taskbar />
    </div>
  );
}
